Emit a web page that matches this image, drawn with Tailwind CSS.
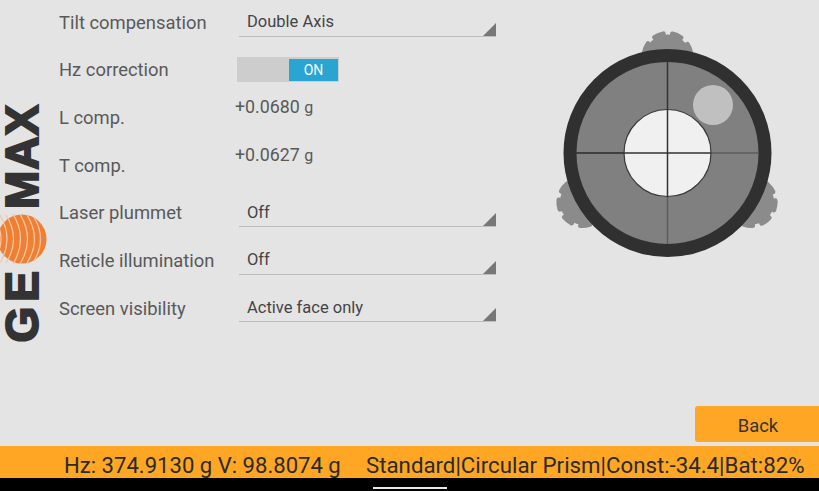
<!DOCTYPE html>
<html lang="en">
<head>
  <meta charset="UTF-8">
  <title>Level settings</title>
  <script src="https://cdn.jsdelivr.net/npm/@tailwindcss/browser@4"></script>
</head>
<body class="w-[819px] h-[491px] overflow-hidden flex flex-col bg-[#e4e4e4] font-['Roboto',sans-serif]">
  <div class="relative h-[446px] flex">
    <!-- logo -->
    <aside class="w-[59px] shrink-0 pt-[102px] flex flex-col items-start font-['Liberation_Sans',sans-serif] font-bold text-[#333333]">
      <span class="[writing-mode:vertical-rl] rotate-180 text-[46px] leading-[44px] h-[107px] tracking-[1px] [-webkit-text-stroke:2px_#333333]">MAX</span>
      <svg class="mt-[5px] mb-[2px]" width="47" height="50" viewBox="0 0 47 50" fill="none">
        <circle cx="22" cy="25" r="24.5" fill="#ef8033"/>
        <g stroke="#f6c6a4" stroke-width="1.3">
          <path d="M-6 3Q8 25-6 47"/>
          <path d="M0 1Q14 25 0 49"/>
          <path d="M6 1Q21 25 6 49"/>
          <path d="M13 0Q28 25 13 50"/>
          <path d="M20 0Q35 25 20 50"/>
          <path d="M27 1Q42 25 27 49"/>
          <path d="M34 3Q47 25 34 47"/>
        </g>
      </svg>
      <span class="[writing-mode:vertical-rl] rotate-180 text-[46px] leading-[44px] tracking-[5px] [-webkit-text-stroke:2px_#333333]">GE</span>
    </aside>

    <!-- settings rows -->
    <div class="w-[437px] shrink-0 flex flex-col gap-[3.67px] text-[18.4px] text-[#595959]">
      <div class="h-[44px] flex items-center">
        <span class="w-[180px] shrink-0 pt-[1px]">Tilt compensation</span>
        <div class="relative flex-1 self-start h-[36.5px] border-b border-[#bdbdbd] flex items-center pl-2 pt-[9px] text-[16.5px] text-[#444444]">Double Axis
          <svg class="absolute right-0 bottom-0" width="13" height="13"><path d="M13 0V13H0Z" fill="#777777"/></svg>
        </div>
      </div>
      <div class="h-[44px] flex items-center">
        <span class="w-[178px] shrink-0 pt-[1px]">Hz correction</span>
        <div class="w-[102px] h-[25px] bg-[#cdcdcd] flex justify-end items-center pr-[1px]">
          <span class="w-[49px] h-[22px] bg-[#2aa4d0] text-white text-[14px] pt-[1px] flex items-center justify-center">ON</span>
        </div>
      </div>
      <div class="h-[44px] flex items-center">
        <span class="w-[176px] shrink-0 pt-[1px]">L comp.</span>
        <span class="self-start h-6 leading-6 text-[17.8px]">+0.0680 <span class="text-[16px]">g</span></span>
      </div>
      <div class="h-[44px] flex items-center">
        <span class="w-[176px] shrink-0 pt-[1px]">T comp.</span>
        <span class="self-start h-6 leading-6 text-[17.8px]">+0.0627 <span class="text-[16px]">g</span></span>
      </div>
      <div class="h-[44px] flex items-center">
        <span class="w-[180px] shrink-0 pt-[1px]">Laser plummet</span>
        <div class="relative flex-1 self-start h-[36.5px] border-b border-[#bdbdbd] flex items-center pl-2 pt-[9px] text-[16.5px] text-[#444444]">Off
          <svg class="absolute right-0 bottom-0" width="13" height="13"><path d="M13 0V13H0Z" fill="#777777"/></svg>
        </div>
      </div>
      <div class="h-[44px] flex items-center">
        <span class="w-[180px] shrink-0 pt-[1px]">Reticle illumination</span>
        <div class="relative flex-1 self-start h-[36.5px] border-b border-[#bdbdbd] flex items-center pl-2 pt-[9px] text-[16.5px] text-[#444444]">Off
          <svg class="absolute right-0 bottom-0" width="13" height="13"><path d="M13 0V13H0Z" fill="#777777"/></svg>
        </div>
      </div>
      <div class="h-[44px] flex items-center">
        <span class="w-[180px] shrink-0 pt-[1px]">Screen visibility</span>
        <div class="relative flex-1 self-start h-[36.5px] border-b border-[#bdbdbd] flex items-center pl-2 pt-[9px] text-[16.5px] text-[#444444]">Active face only
          <svg class="absolute right-0 bottom-0" width="13" height="13"><path d="M13 0V13H0Z" fill="#777777"/></svg>
        </div>
      </div>
    </div>

    <!-- level dial -->
    <svg class="ml-[4px] mt-[23px] shrink-0" width="287" height="250" viewBox="500 23 287 250" fill="none">
      <defs>
        <g id="gear">
          <circle cx="667.5" cy="57" r="22.5" fill="#8b8b8b"/>
          <circle cx="667.5" cy="57" r="23.5" stroke="#8b8b8b" stroke-width="5" stroke-dasharray="9.2 9.2" stroke-linecap="round" transform="rotate(11.3 667.5 57)"/>
        </g>
      </defs>
      <use href="#gear"/>
      <use href="#gear" transform="translate(1 1) rotate(120 667.5 153)"/>
      <use href="#gear" transform="translate(-2 1) rotate(240 667.5 153)"/>
      <circle cx="667.5" cy="153" r="97.5" fill="#808080" stroke="#303030" stroke-width="13"/>
      <circle cx="713" cy="105" r="20" fill="#c0c0c0"/>
      <path d="M576 153H758" stroke="#5c5c5c" stroke-width="1.5"/>
      <path d="M667.5 197V244" stroke="#5c5c5c" stroke-width="1.5"/>
      <circle cx="667.5" cy="153" r="43.5" fill="#f0f0f0" stroke="#3a3a3a" stroke-width="1.2"/>
      <path d="M667.5 62V197M624 153H711M576 153H624" stroke="#333333" stroke-width="1.5"/>
    </svg>

    <button class="absolute right-0 top-[406px] w-[124px] h-[36px] rounded-l-[3px] bg-[#ffa624] text-[18.4px] text-[#333333] pt-[3px] pl-[2px]">Back</button>
  </div>

  <!-- status bar -->
  <div class="h-[32px] shrink-0 bg-[#ffa624] flex items-center pl-[64px] text-[22.1px] text-[#2a2a2a] whitespace-nowrap pt-[7px]">
    <span class="w-[302px] shrink-0">Hz: 374.9130 g V: 98.8074 g</span>
    <span class="text-[22.25px]">Standard|Circular Prism|Const:-34.4|Bat:82%</span>
  </div>
  <!-- nav bar -->
  <div class="flex-1 bg-black flex justify-center items-end pb-[2px]">
    <div class="w-[74px] h-[2px] bg-[#e8e8e8]"></div>
  </div>
</body>
</html>
